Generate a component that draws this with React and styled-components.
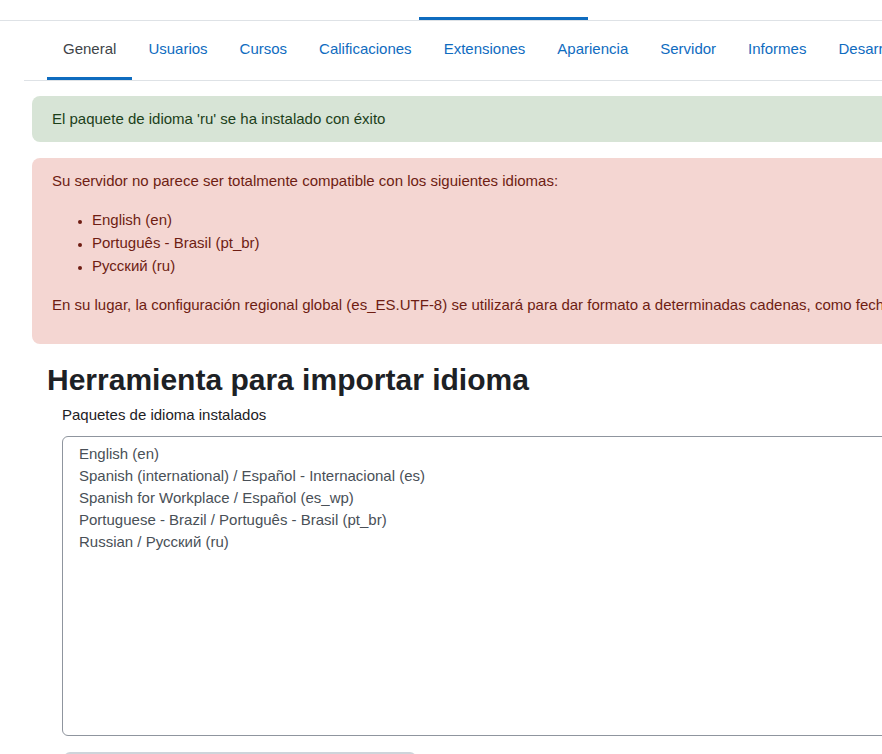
import React from 'react';
import styled, { createGlobalStyle } from 'styled-components';

const GlobalStyle = createGlobalStyle`
  html, body {
    margin: 0;
    padding: 0;
    background: #fff;
    overflow: hidden;
  }
  body {
    font-family: "Liberation Sans", Arial, sans-serif;
    font-size: 15px;
    line-height: 1.5;
    color: #1d2125;
  }
`;

const Page = styled.div`
  width: 1200px;
`;

const TopBar = styled.header`
  height: 20px;
  border-bottom: 1px solid #dee2e6;
  display: flex;
`;

const TopItem = styled.div`
  margin-left: 419px;
  width: 169px;
  height: 20px;
  box-sizing: border-box;
  border-bottom: 3px solid #0f6cbf;
`;

const SecondaryNav = styled.nav`
  margin-left: 24px;
  padding-left: 23px;
  display: flex;
  border-bottom: 1px solid #dee2e6;
`;

const Tab = styled.a`
  display: block;
  padding: 17px 16px 16.5px;
  border-bottom: 3px solid ${p => (p.$active ? '#0f6cbf' : 'transparent')};
  color: ${p => (p.$active ? '#404448' : '#0f6cbf')};
  text-decoration: none;
  white-space: nowrap;
`;

const Main = styled.main`
  padding: 15px 0 0 32px;
`;

const Alert = styled.div`
  padding: ${p => (p.$tight ? '12px 20px 11px' : '12px 20px')};
  margin-bottom: 16px;
  border-radius: 8px;
  background: ${p => (p.$variant === 'success' ? '#d7e4d6' : '#f4d6d2')};
  color: ${p => (p.$variant === 'success' ? '#1c3f1a' : '#6e1d13')};
`;

const AlertText = styled.p`
  margin: 0 0 16px;
`;

const LangList = styled.ul`
  margin: 0 0 16.5px;
  padding-left: 40px;
  li {
    line-height: 23px;
  }
  li::marker {
    font-size: 12px;
  }
`;

const Title = styled.h2`
  margin: 17.5px 0 6px 15px;
  font-size: 30px;
  line-height: 1.2;
  font-weight: 700;
  color: #1d2125;
`;

const Field = styled.div`
  margin-left: 30px;
`;

const Label = styled.label`
  display: block;
  margin-bottom: 9.5px;
  color: #1d2125;
`;

const ListBox = styled.div`
  box-sizing: border-box;
  height: 300px;
  border: 1px solid #8f959e;
  border-radius: 6px;
  padding: 6px 12px;
  color: #495057;
  line-height: 22px;
`;

const Option = styled.div`
  padding-left: 4px;
  white-space: nowrap;
`;

const SubmitStub = styled.div`
  margin: 16px 0 0 2px;
  width: 352px;
  height: 36px;
  border-radius: 6px;
  background: #ced4da;
`;

const tabs = [
  'General',
  'Usuarios',
  'Cursos',
  'Calificaciones',
  'Extensiones',
  'Apariencia',
  'Servidor',
  'Informes',
  'Desarrollo',
];

const installed = [
  'English (en)',
  'Spanish (international) / Español - Internacional (es)',
  'Spanish for Workplace / Español (es_wp)',
  'Portuguese - Brazil / Português - Brasil (pt_br)',
  'Russian / Русский (ru)',
];

export default function App() {
  return (
    <Page>
      <GlobalStyle />
      <TopBar>
        <TopItem />
      </TopBar>
      <SecondaryNav>
        {tabs.map((t, i) => (
          <Tab key={t} $active={i === 0}>
            {t}
          </Tab>
        ))}
      </SecondaryNav>
      <Main>
        <Alert $variant="success" $tight>
          El paquete de idioma 'ru' se ha instalado con éxito
        </Alert>
        <Alert $variant="danger">
          <AlertText>Su servidor no parece ser totalmente compatible con los siguientes idiomas:</AlertText>
          <LangList>
            <li>English (en)</li>
            <li>Português - Brasil (pt_br)</li>
            <li>Русский (ru)</li>
          </LangList>
          <AlertText>
            En su lugar, la configuración regional global (es_ES.UTF-8) se utilizará para dar formato a determinadas cadenas, como fechas o números.
          </AlertText>
        </Alert>
        <Title>Herramienta para importar idioma</Title>
        <Field>
          <Label>Paquetes de idioma instalados</Label>
          <ListBox>
            {installed.map(l => (
              <Option key={l}>{l}</Option>
            ))}
          </ListBox>
          <SubmitStub />
        </Field>
      </Main>
    </Page>
  );
}
